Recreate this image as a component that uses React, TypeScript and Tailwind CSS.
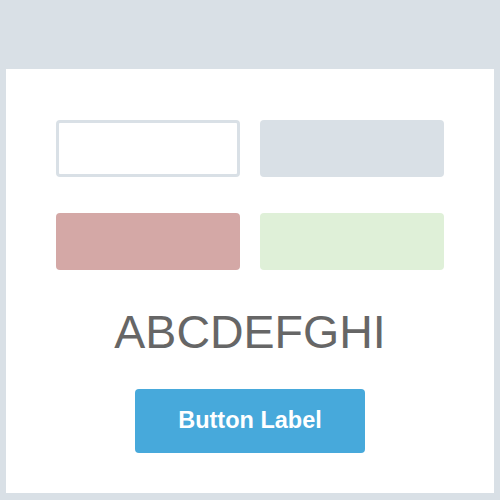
import React from 'react';

const App: React.FC = () => {
  return (
    <div className="w-[500px] h-[500px] bg-[#d9e0e6] pt-[69px] px-[6px] pb-[7px]" style={{ fontFamily: '"Liberation Sans", Arial, sans-serif' }}>
      <div className="h-full bg-white flex flex-col items-center pt-[51px]">
        <div className="grid grid-cols-[184px_184px] gap-x-[20px] gap-y-[36px]">
          <div className="h-[57px] rounded-[4px] border-[3px] border-[#d9e0e6] bg-white" />
          <div className="h-[57px] rounded-[4px] bg-[#d9e0e6]" />
          <div className="h-[57px] rounded-[4px] bg-[#d4a8a6]" />
          <div className="h-[57px] rounded-[4px] bg-[#dff0d8]" />
        </div>
        <div className="mt-[39px] text-[46.5px] leading-[46px] text-[#666666]">ABCDEFGHI</div>
        <button className="mt-[34px] w-[230px] h-[64px] rounded-[4px] bg-[#47a9db] text-white font-bold text-[23.5px]">
          Button Label
        </button>
      </div>
    </div>
  );
};

export default App;
